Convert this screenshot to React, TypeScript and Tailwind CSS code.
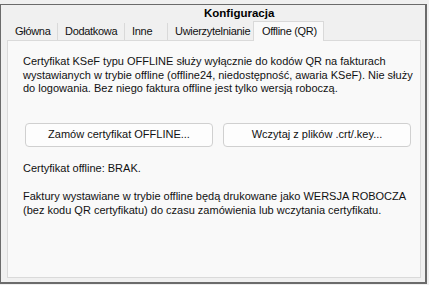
import React from "react";

const tabs = [
  { label: "Główna", w: "w-[50px]" },
  { label: "Dodatkowa", w: "w-[67px]" },
  { label: "Inne", w: "w-[43px]" },
  { label: "Uwierzytelnianie", w: "w-[86px]" },
];

const Button: React.FC<{ text: string }> = ({ text }) => (
  <button className="h-[24px] w-[188px] rounded-[4px] border border-[#d0d0d0] bg-[#fdfdfd] text-[11px] text-[#111]">
    {text}
  </button>
);

export default function App() {
  return (
    <div
      className="h-[285px] w-[429px] bg-[#f0f0f0] pt-[4px]"
      style={{ fontFamily: '"Liberation Sans", Arial, sans-serif' }}
    >
      <div className="flex h-[280px] w-[427px] flex-col border-t border-l border-r-2 border-b-2 border-[#6b6b6b] bg-[#f0f0f0] pb-[4px] pl-[6px] pr-[4px]">
        {/* title */}
        <div className="h-[16px] pl-[197px] text-[11.5px] font-bold leading-[16px] text-black">
          Konfiguracja
        </div>

        {/* tab strip */}
        <div className="relative z-10 flex h-[19px] items-end pl-[1px]">
          {tabs.map((t) => (
            <div
              key={t.label}
              className={`${t.w} flex h-[17px] items-center border-r border-[#d9d9d9] pl-[7px] text-[11px] tracking-[-0.3px] text-[#111]`}
            >
              {t.label}
            </div>
          ))}
          <div className="-ml-px -mb-px flex h-[20px] w-[71px] items-center border border-b-0 border-[#d9d9d9] bg-[#f9f9f9] pb-[1px] pl-[8px] text-[11px] tracking-[-0.3px] text-[#111]">
            Offline (QR)
          </div>
        </div>

        {/* panel */}
        <div className="flex-1 border border-[#dadada] bg-[#f9f9f9] pl-[15px] pt-[14px] text-[11px] leading-[13.5px] text-[#111]">
          <p>
            Certyfikat KSeF typu OFFLINE służy wyłącznie do kodów QR na fakturach
            <br />
            wystawianych w trybie offline (offline24, niedostępność, awaria KSeF). Nie służy
            <br />
            do logowania. Bez niego faktura offline jest tylko wersją roboczą.
          </p>

          <div className="mt-[27px] flex gap-[10px] pl-[2px]">
            <Button text="Zamów certyfikat OFFLINE..." />
            <Button text="Wczytaj z plików .crt/.key..." />
          </div>

          <p className="mt-[15px]">Certyfikat offline: BRAK.</p>

          <p className="mt-[15px]">
            Faktury wystawiane w trybie offline będą drukowane jako WERSJA ROBOCZA
            <br />
            (bez kodu QR certyfikatu) do czasu zamówienia lub wczytania certyfikatu.
          </p>
        </div>
      </div>
    </div>
  );
}
